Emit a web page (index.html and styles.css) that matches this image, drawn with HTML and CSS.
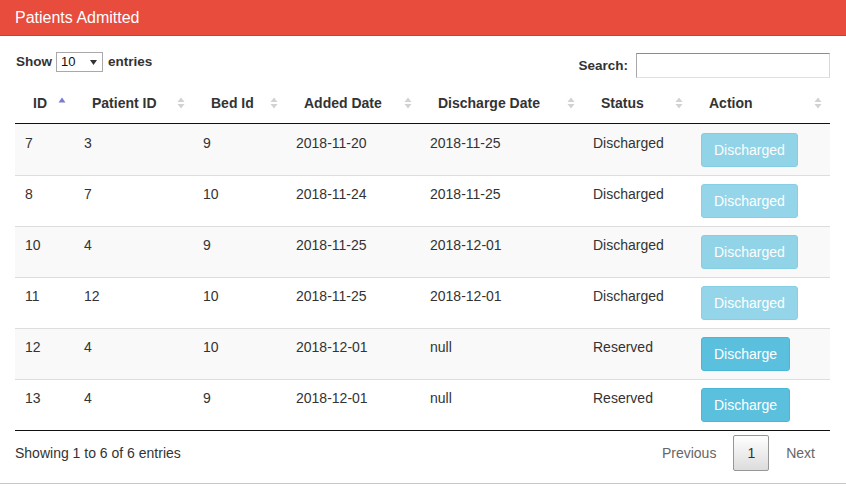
FILE: index.html
```html
<!DOCTYPE html>
<html>
<head>
<meta charset="utf-8">
<link rel="stylesheet" href="styles.css">
</head>
<body>
<div class="box">
  <div class="box-header"><h3 class="box-title">Patients Admitted</h3></div>
  <div class="box-body">
    <div class="dt-top">
      <div class="len">Show <span class="select"><span>10</span><svg width="7" height="5" viewBox="0 0 7 5"><path d="M0 0H7L3.5 5Z" fill="#333"/></svg></span> entries</div>
      <div class="search">Search: <span class="input"></span></div>
    </div>
    <table class="dt">
      <colgroup>
        <col style="width:59px"><col style="width:119px"><col style="width:93px"><col style="width:134px"><col style="width:163px"><col style="width:108px"><col style="width:139px">
      </colgroup>
      <thead>
        <tr>
          <th><div class="th"><span>ID</span><svg class="sort" width="8" height="12" viewBox="0 0 8 12"><path d="M0.5 5.5L4 0.5L7.5 5.5Z" fill="#7b7bd3"/></svg></div></th>
          <th><div class="th"><span>Patient ID</span><svg class="sort" width="8" height="12" viewBox="0 0 8 12"><path d="M0.5 5L4 0.5L7.5 5Z M0.5 7L4 11.5L7.5 7Z" fill="#d2d2d2"/></svg></div></th>
          <th><div class="th"><span>Bed Id</span><svg class="sort" width="8" height="12" viewBox="0 0 8 12"><path d="M0.5 5L4 0.5L7.5 5Z M0.5 7L4 11.5L7.5 7Z" fill="#d2d2d2"/></svg></div></th>
          <th><div class="th"><span>Added Date</span><svg class="sort" width="8" height="12" viewBox="0 0 8 12"><path d="M0.5 5L4 0.5L7.5 5Z M0.5 7L4 11.5L7.5 7Z" fill="#d2d2d2"/></svg></div></th>
          <th><div class="th"><span>Discharge Date</span><svg class="sort" width="8" height="12" viewBox="0 0 8 12"><path d="M0.5 5L4 0.5L7.5 5Z M0.5 7L4 11.5L7.5 7Z" fill="#d2d2d2"/></svg></div></th>
          <th><div class="th"><span>Status</span><svg class="sort" width="8" height="12" viewBox="0 0 8 12"><path d="M0.5 5L4 0.5L7.5 5Z M0.5 7L4 11.5L7.5 7Z" fill="#d2d2d2"/></svg></div></th>
          <th><div class="th"><span>Action</span><svg class="sort" width="8" height="12" viewBox="0 0 8 12"><path d="M0.5 5L4 0.5L7.5 5Z M0.5 7L4 11.5L7.5 7Z" fill="#d2d2d2"/></svg></div></th>
        </tr>
      </thead>
      <tbody>
        <tr class="odd"><td>7</td><td>3</td><td>9</td><td>2018-11-20</td><td>2018-11-25</td><td>Discharged</td><td><button class="btn disabled">Discharged</button></td></tr>
        <tr><td>8</td><td>7</td><td>10</td><td>2018-11-24</td><td>2018-11-25</td><td>Discharged</td><td><button class="btn disabled">Discharged</button></td></tr>
        <tr class="odd"><td>10</td><td>4</td><td>9</td><td>2018-11-25</td><td>2018-12-01</td><td>Discharged</td><td><button class="btn disabled">Discharged</button></td></tr>
        <tr><td>11</td><td>12</td><td>10</td><td>2018-11-25</td><td>2018-12-01</td><td>Discharged</td><td><button class="btn disabled">Discharged</button></td></tr>
        <tr class="odd"><td>12</td><td>4</td><td>10</td><td>2018-12-01</td><td>null</td><td>Reserved</td><td><button class="btn">Discharge</button></td></tr>
        <tr><td>13</td><td>4</td><td>9</td><td>2018-12-01</td><td>null</td><td>Reserved</td><td><button class="btn">Discharge</button></td></tr>
      </tbody>
    </table>
    <div class="dt-bottom">
      <div class="info">Showing 1 to 6 of 6 entries</div>
      <div class="paginate">
        <span class="pbtn dis">Previous</span>
        <span class="pbtn current">1</span>
        <span class="pbtn dis">Next</span>
      </div>
    </div>
  </div>
</div>
</body>
</html>
```

FILE: styles.css
```css
* { box-sizing: border-box; }
html, body { margin: 0; padding: 0; background: #fff; }
body {
  font-family: "Liberation Sans", Arial, sans-serif;
  font-size: 14px;
  line-height: 20px;
  color: #333;
}
.box {
  border-bottom: 1px solid #c6c6c6;
}
.box-header {
  background: #e74c3c;
  height: 36px;
  border-bottom: 1px solid #cf3f30;
  padding: 0 15px;
  display: flex;
  align-items: center;
}
.box-title {
  margin: 0;
  font-size: 16px;
  font-weight: normal;
  color: #fff;
  line-height: 20px;
  padding-top: 1px;
}
.box-body {
  padding: 16px 16px 12px 15px;
}
.dt-top {
  display: flex;
  justify-content: space-between;
  align-items: flex-start;
  margin-bottom: 5px;
}
.len {
  font-weight: bold;
  font-size: 13.5px;
  display: flex;
  align-items: center;
  height: 20px;
  padding-left: 1px;
}
.select {
  display: inline-flex;
  align-items: center;
  justify-content: space-between;
  width: 47px;
  height: 20px;
  border: 1px solid #a9a9a9;
  margin: 0 5px 0 4px;
  padding: 0 5px 0 4px;
  font-weight: normal;
  color: #111;
  font-size: 13px;
  background: #fff;
}
.search {
  display: flex;
  align-items: center;
  font-weight: bold;
  font-size: 13.5px;
  padding-top: 1px;
}
.input {
  display: inline-block;
  width: 194px;
  height: 25px;
  margin-left: 8px;
  border: 1px solid #a9a9a9;
  border-top-color: #8c8c8c;
  border-bottom-color: #e0e0e0;
  border-right-color: #d8d8d8;
}
.dt {
  width: 815px;
  border-collapse: collapse;
  table-layout: fixed;
}
.dt th {
  padding: 10px 8px 10px 18px;
  text-align: left;
  font-weight: bold;
  border-bottom: 1px solid #111;
  white-space: nowrap;
}
.th {
  display: flex;
  justify-content: space-between;
  align-items: center;
}
.sort { display: block; margin-top: -1px; }
.dt td {
  padding: 8px 10px;
  border-top: 1px solid #ddd;
  vertical-align: top;
  white-space: nowrap;
}
.dt tbody tr:first-child td { border-top: none; }
.dt tbody tr:first-child td { padding-top: 9px; }
.dt tr.odd td { background: #f9f9f9; }
.dt tbody tr:last-child td { border-bottom: 1px solid #111; }
.btn {
  font-family: "Liberation Sans", Arial, sans-serif;
  font-size: 14px;
  line-height: 20px;
  padding: 6px 12px;
  color: #fff;
  background: #5bc0de;
  border: 1px solid #46b8da;
  border-radius: 3px;
  display: block;
}
.btn.disabled { opacity: 0.65; }
.dt-bottom {
  display: flex;
  justify-content: space-between;
  align-items: center;
  padding-top: 4px;
}
.paginate { display: flex; align-items: center; }
.pbtn {
  padding: 7px 14px;
  margin-left: 2px;
  border: 1px solid transparent;
  border-radius: 2px;
  line-height: 20px;
}
.pbtn.dis { color: #666; }
.pbtn.current {
  color: #333;
  border-color: #979797;
  background: linear-gradient(to bottom, #fff 0%, #dcdcdc 100%);
  padding: 7px 13px;
}
```
